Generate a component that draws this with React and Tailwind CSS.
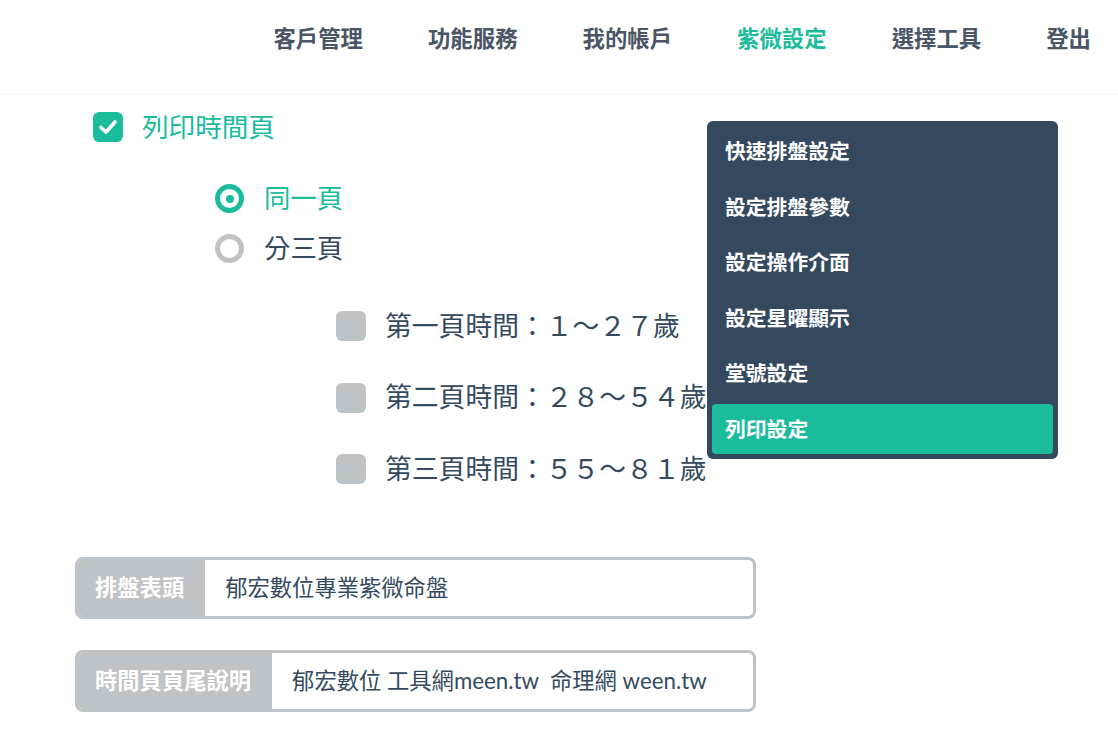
import React from "react";

const font = { fontFamily: 'Lato, "Noto Sans CJK TC", "Noto Sans", sans-serif' };

function Nav() {
  const items = ["客戶管理", "功能服務", "我的帳戶", "紫微設定", "選擇工具", "登出"];
  return (
    <header className="h-[95px] border-b border-[#eeeeee] flex justify-end items-start pt-[26px] pr-[27px] gap-[65px]">
      {items.map((t) => (
        <span
          key={t}
          className={`text-[22.4px] leading-[26px] font-bold whitespace-nowrap ${t === "紫微設定" ? "text-[#1abc9c]" : "text-[#4a5565]"}`}
        >
          {t}
        </span>
      ))}
    </header>
  );
}

function Check({ on }) {
  return (
    <span className={`w-[30px] h-[30px] rounded-[6px] flex items-center justify-center shrink-0 ${on ? "bg-[#1abc9c]" : "bg-[#bdc3c7]"}`}>
      {on && (
        <svg width="20" height="16" viewBox="0 0 20 16" fill="none">
          <polyline points="3,8.5 8,13 17,3" stroke="white" strokeWidth="3.6" strokeLinecap="round" strokeLinejoin="round" />
        </svg>
      )}
    </span>
  );
}

function Radio({ on }) {
  return (
    <span className={`w-[29px] h-[29px] rounded-full border-[5px] flex items-center justify-center shrink-0 ${on ? "border-[#1abc9c]" : "border-[#bdc3c7]"}`}>
      {on && <span className="w-[8px] h-[8px] rounded-full bg-[#1abc9c]" />}
    </span>
  );
}

function Field({ label, value }) {
  return (
    <div className="flex h-[62px] w-[681px] border-[3px] border-[#bdc3c7] rounded-[8px] overflow-hidden">
      <div className="bg-[#bdc3c7] text-white font-bold text-[22.3px] flex items-center pl-[17px] pr-[21px] whitespace-nowrap">
        {label}
      </div>
      <div className="flex-1 flex items-center pl-[20px] text-[22.3px] text-[#34495e] whitespace-pre">{value}</div>
    </div>
  );
}

function Dropdown() {
  const items = ["快速排盤設定", "設定排盤參數", "設定操作介面", "設定星曜顯示", "堂號設定", "列印設定"];
  return (
    <div className="absolute left-[707px] top-[121px] w-[351px] h-[338px] bg-[#34495e] rounded-[6px] p-[5px] flex flex-col gap-[5.6px]">
      {items.map((t, i) => (
        <div
          key={t}
          className={`h-[50px] flex items-center pl-[13px] pb-[1px] text-white font-bold text-[20.8px] rounded-[4px] ${i === items.length - 1 ? "bg-[#1abc9c]" : ""}`}
        >
          {t}
        </div>
      ))}
    </div>
  );
}

export default function App() {
  return (
    <div className="relative w-[1118px] h-[732px] bg-white overflow-hidden" style={font}>
      <Nav />
      <main className="pl-[75px] pt-[17px]">
        <div className="ml-[18px] flex items-center gap-[19px] h-[30px]">
          <Check on />
          <span className="text-[26.6px] text-[#1abc9c] leading-none">列印時間頁</span>
        </div>
        <div className="ml-[140px] mt-[42px] flex flex-col gap-[21px]">
          <div className="flex items-center gap-[20px] h-[29px]">
            <Radio on />
            <span className="text-[26.4px] text-[#1abc9c] leading-none">同一頁</span>
          </div>
          <div className="flex items-center gap-[20px] h-[29px]">
            <Radio />
            <span className="text-[26.4px] text-[#34495e] leading-none">分三頁</span>
          </div>
        </div>
        <div className="ml-[261px] mt-[48px] flex flex-col gap-[41.5px]">
          {["第一頁時間：１～２７歲", "第二頁時間：２８～５４歲", "第三頁時間：５５～８１歲"].map((t) => (
            <div key={t} className="flex items-center gap-[19px] h-[30px]">
              <Check />
              <span className="text-[26.8px] text-[#34495e] leading-none whitespace-nowrap">{t}</span>
            </div>
          ))}
        </div>
        <div className="mt-[73px] flex flex-col gap-[31px]">
          <Field label="排盤表頭" value="郁宏數位專業紫微命盤" />
          <Field label="時間頁頁尾說明" value="郁宏數位 工具網meen.tw  命理網 ween.tw" />
        </div>
      </main>
      <Dropdown />
    </div>
  );
}
